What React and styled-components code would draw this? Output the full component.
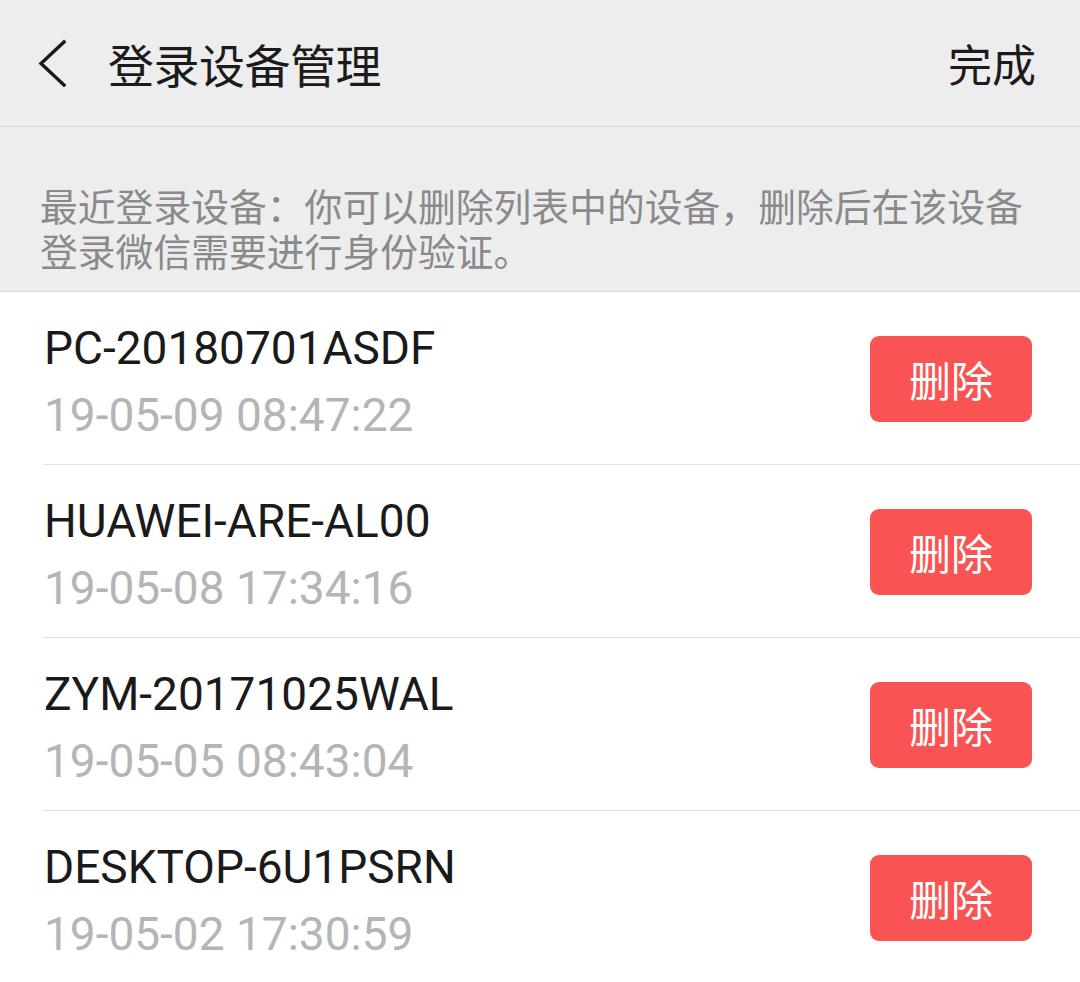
import React from "react";
import styled, { createGlobalStyle } from "styled-components";

const Global = createGlobalStyle`
  html, body { margin: 0; padding: 0; background: #ffffff; }
  body { font-family: Roboto, "Noto Sans CJK SC", sans-serif; }
`;

const Page = styled.div`
  width: 1080px;
  height: 982px;
  overflow: hidden;
  background: #ffffff;
`;

const Header = styled.header`
  height: 126px;
  background: #ededed;
  border-bottom: 1px solid #d9d9d9;
  display: flex;
  align-items: center;
  padding: 0 44px 0 38px;
  box-sizing: content-box;
`;

const BackButton = styled.div`
  width: 30px;
  height: 48px;
  display: flex;
  align-items: center;
  margin-right: 40px;
`;

const Title = styled.h1`
  margin: 0;
  flex: 1;
  font-family: "Noto Sans CJK SC", sans-serif;
  font-weight: 400;
  font-size: 46px;
  color: #1b1b1b;
  letter-spacing: -0.5px;
`;

const Done = styled.span`
  font-family: "Noto Sans CJK SC", sans-serif;
  font-size: 44px;
  color: #1b1b1b;
`;

const Notice = styled.div`
  background: #ededed;
  border-bottom: 1px solid #d9d9d9;
  height: 165px;
  box-sizing: border-box;
  padding: 55px 40px 0 40px;
`;

const NoticeLine = styled.p`
  margin: 0;
  font-family: "Noto Sans CJK SC", sans-serif;
  font-size: 37.8px;
  line-height: 45px;
  height: 45px;
  color: #8a8a8a;
  white-space: nowrap;
`;

const List = styled.div`
  display: flex;
  flex-direction: column;
`;

const Row = styled.div`
  height: 173px;
  box-sizing: border-box;
  display: flex;
  align-items: center;
  padding: 0 48px 0 44px;
  position: relative;
  &::after {
    content: "";
    position: absolute;
    left: 43px;
    right: 0;
    bottom: 0;
    height: 1px;
    background: ${(p) => (p.$last ? "transparent" : "#e2e2e2")};
  }
`;

const Info = styled.div`
  flex: 1;
  display: flex;
  flex-direction: column;
  margin-top: 6px;
`;

const Name = styled.div`
  font-family: Roboto, sans-serif;
  font-size: 46px;
  line-height: 67px;
  color: #1a1a1a;
`;

const Time = styled.div`
  font-family: Roboto, sans-serif;
  font-size: 46px;
  line-height: 67px;
  color: #b5b5b5;
`;

const DeleteButton = styled.button`
  width: 162px;
  height: 86px;
  border: none;
  border-radius: 9px;
  background: #f95453;
  color: #ffffff;
  font-family: "Noto Sans CJK SC", sans-serif;
  font-size: 42px;
  padding: 0;
  display: flex;
  align-items: center;
  justify-content: center;
`;

const devices = [
  { name: "PC-20180701ASDF", time: "19-05-09 08:47:22" },
  { name: "HUAWEI-ARE-AL00", time: "19-05-08 17:34:16" },
  { name: "ZYM-20171025WAL", time: "19-05-05 08:43:04" },
  { name: "DESKTOP-6U1PSRN", time: "19-05-02 17:30:59" },
];

export default function App() {
  return (
    <Page>
      <Global />
      <Header>
        <BackButton>
          <svg width="30" height="48" viewBox="0 0 30 48">
            <polyline
              points="26,3 3,24.5 26,46"
              fill="none"
              stroke="#1b1b1b"
              strokeWidth="3.4"
              strokeLinecap="square"
            />
          </svg>
        </BackButton>
        <Title>登录设备管理</Title>
        <Done>完成</Done>
      </Header>
      <Notice>
        <NoticeLine>最近登录设备：你可以删除列表中的设备，删除后在该设备</NoticeLine>
        <NoticeLine>登录微信需要进行身份验证。</NoticeLine>
      </Notice>
      <List>
        {devices.map((d, i) => (
          <Row key={d.name} $last={i === devices.length - 1}>
            <Info>
              <Name>{d.name}</Name>
              <Time>{d.time}</Time>
            </Info>
            <DeleteButton>删除</DeleteButton>
          </Row>
        ))}
      </List>
    </Page>
  );
}
